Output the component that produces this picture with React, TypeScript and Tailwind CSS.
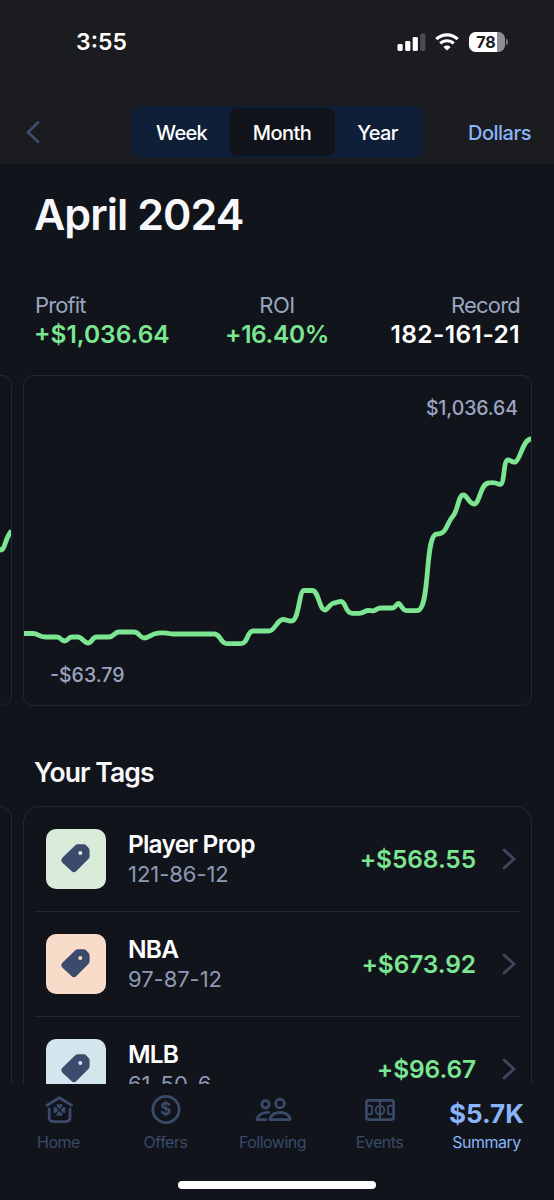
import React from "react";

const GREEN = "#7be591";

function Chevron({ left = false, className = "" }: { left?: boolean; className?: string }) {
  return (
    <svg width="14" height="22" viewBox="0 0 14 22" fill="none" className={className}>
      <path
        d={left ? "M12 1.5 2 11.2l10 9.5" : "M2 1.9 12 11 2 20.1"}
        stroke="currentColor"
        strokeWidth="2.7"
        strokeLinecap="round"
        strokeLinejoin="miter"
      />
    </svg>
  );
}

function StatusBar() {
  return (
    <div className="flex h-[83px] items-center justify-between pl-[76px] pr-[46px]">
      <span className="text-[23px] font-semibold leading-7 text-white">3:55</span>
      <div className="flex items-center">
        <svg width="29" height="20" viewBox="0 0 29 20">
          <rect x="0.5" y="12" width="5.2" height="7" rx="1.4" fill="#fff" />
          <rect x="8.2" y="9" width="5.2" height="10" rx="1.4" fill="#fff" />
          <rect x="15.7" y="5" width="5.2" height="14" rx="1.4" fill="#fff" />
          <rect x="23.2" y="1.5" width="5.2" height="17.5" rx="1.4" fill="#4b4c50" />
        </svg>
        <svg width="24" height="18" viewBox="0 0 24 18" className="ml-[9px]" fill="none" stroke="#fff" strokeWidth="3.1">
          <path d="M1.3 6.2a15.3 15.3 0 0 1 21.4 0" />
          <path d="M5.3 10.4a9.6 9.6 0 0 1 13.4 0" />
          <path d="M12 17.6l3.6-3.6a5.2 5.2 0 0 0-7.2 0z" fill="#fff" stroke="none" />
        </svg>
        <div className="ml-[10px] flex h-5 w-[36px] items-center justify-center overflow-hidden rounded-[6.5px] bg-[linear-gradient(90deg,#fff_78%,#8e8f91_78%)] pr-[2px]">
          <span className="text-[16px] font-bold leading-5 text-[#1a1c1f]">78</span>
        </div>
        <div className="ml-[1px] h-[6px] w-[2px] rounded-r-full bg-[#77787b]" />
      </div>
    </div>
  );
}

function Header() {
  return (
    <header className="h-[164px] shrink-0 bg-[#1a1c1f]">
      <StatusBar />
      <div className="mt-[23px] flex h-[52px] items-center pr-[23px] text-xl font-medium text-white">
        <Chevron left className="ml-[26px] text-[#3d4d6d]" />
        <div className="ml-[91px] flex h-[52px] w-[292px] rounded-[10px] bg-[#0f1f38] py-[2px]">
          <span className="flex w-[99px] items-center justify-center pl-[2px] pt-px tracking-[-0.7px]">Week</span>
          <span className="flex w-[105px] items-center justify-center rounded-[8px] bg-[#11141b] pr-px pt-px tracking-[-0.5px]">Month</span>
          <span className="flex w-[85px] items-center justify-center pt-px tracking-[-0.7px]">Year</span>
        </div>
        <span className="ml-auto pt-px tracking-[-0.5px] text-[#8ab4f8]">Dollars</span>
      </div>
    </header>
  );
}

function Stats() {
  return (
    <div className="mt-[24px] grid h-[58px] grid-cols-3 pl-[34px] pr-[34px] text-[24.5px] font-semibold leading-7 text-[#7be591]">
      <div>
        <div className="pl-px text-[22px] font-normal leading-[30px] tracking-[-0.9px] text-[#9ba5c0]">Profit</div>
        <div>+$1,036.64</div>
      </div>
      <div className="text-center">
        <div className="text-[22px] font-normal leading-[30px] tracking-[-0.4px] text-[#9ba5c0]">ROI</div>
        <div className="tracking-[-0.4px]">+16.40%</div>
      </div>
      <div className="text-right">
        <div className="text-[22px] font-normal leading-[30px] tracking-[-0.8px] text-[#9ba5c0]">Record</div>
        <div className="tracking-[0.4px] text-white">182-161-21</div>
      </div>
    </div>
  );
}

const CURVE =
  "M23 633.5H33C38 633.5 39 637 45 637H57C61 637 61 641 64.5 641S68 637 72 637H78C82 637 84 643 88 643S92 637 97 637H109C114 637 114 632 119 632H134C139 632 140 638 144 638S151 635 154 634C160 632 165 632.5 172 634H214C221 634 220 643.7 227 643.7H241C248 643.7 247 631 253 631H269C275 631 277 619.5 283 619.5C287 619.5 287 621 291.5 621C299 621 299 590.5 304 590.5H312C319 590.5 319 610 325 610C328 610 329 604 334 603C338 602.5 338 601.5 341 601.5C346 601.5 345 613.3 352 613.3H359C364 613.3 365 610.5 368 610.5C371 610.5 371 611 373.5 610.8C376 610.5 377 608 381 608H392C396 608 396 603.5 398.5 603.5S402 610.7 407 610.7H417C431 610.7 424 534 437 534C447 534 446 524 453 516C458 511 458 495 463.5 495C467 495 469 504 474 504C480 504 480 483 489 483C494 482 496 483 500 484.5C505 484.5 503 460 508 460C511 460 511 462.5 515 462.2C520 461 523 439 531 439";

function ChartRow() {
  return (
    <div className="mt-[27px] flex h-[331px] shrink-0 gap-[11px]">
      <div className="w-3 overflow-hidden rounded-r-[10px] border border-l-0 border-[#1c2a3b]">
        <svg width="11" height="329" viewBox="0 376 11 329" fill="none">
          <path d="M-2 548C1 551.5 3 550.5 5 544C7 538 8 534.5 11.5 531" stroke={GREEN} strokeWidth="4.8" />
        </svg>
      </div>
      <div className="relative w-[509px] overflow-hidden rounded-[10px] border border-[#1c2a3b]">
        <svg width="507" height="329" viewBox="24 376 507 329" fill="none" className="block">
          <path d={CURVE} stroke={GREEN} strokeWidth="4.8" strokeLinejoin="round" />
        </svg>
        <span className="absolute right-[13px] top-[20px] text-[19.5px] font-medium leading-6 tracking-[-0.1px] text-[#9ba5c0]">$1,036.64</span>
        <span className="absolute bottom-[18px] left-[26px] text-[19.5px] font-medium leading-6 text-[#9ba5c0]">-$63.79</span>
      </div>
    </div>
  );
}

const TAGS = [
  { name: "Player Prop", record: "121-86-12", value: "+$568.55", tile: "bg-[#d9ecda]" },
  { name: "NBA", record: "97-87-12", value: "+$673.92", tile: "bg-[#f8dbc8]" },
  { name: "MLB", record: "61-50-6", value: "+$96.67", tile: "bg-[#d3e5ed]" },
];

function TagIcon() {
  return (
    <svg width="29" height="29" viewBox="0 0 29 29">
      <path
        fill="#3b4b6b"
        fillRule="evenodd"
        d="M13.8 1.7Q15.2 .3 17 .3H22.6Q24.2 .3 25.3 1.4L27.5 3.8Q28.6 5 28.6 6.5V12.3Q28.6 13.9 27.4 15L15.4 27Q12.9 29.5 10.4 27L1.5 18.7Q-.9 16.3 1.4 13.8ZM19.3 7a2 2 0 1 0 .01 4a2 2 0 1 0 0-4Z"
      />
    </svg>
  );
}

function TagsRow() {
  return (
    <div className="flex min-h-0 flex-1 gap-[11px] overflow-hidden">
      <div className="h-[420px] w-3 rounded-tr-[16px] border-r border-t border-[#1c2a3b]" />
      <div className="h-[420px] w-[509px] shrink-0 rounded-[16px] border border-[#1c2a3b] px-[11px]">
        {TAGS.map((t) => (
          <div key={t.name} className="flex h-[105px] items-center border-b border-[#1c2a3b] pl-[11px] pr-1">
            <div className={`flex size-[60px] shrink-0 items-center justify-center rounded-[10px] pb-px pr-[2px] ${t.tile}`}>
              <TagIcon />
            </div>
            <div className="ml-[22px] flex-1 leading-[30px]">
              <div className="text-[24.5px] font-semibold tracking-[-0.8px] text-white">{t.name}</div>
              <div className="text-[22px] tracking-[-0.05px] text-[#8e9ab5]">{t.record}</div>
            </div>
            <span className="text-[24.5px] font-semibold leading-[30px] tracking-[-0.1px] text-[#7be591]">{t.value}</span>
            <Chevron className="ml-[26px] text-[#3d4963]" />
          </div>
        ))}
      </div>
    </div>
  );
}

const LEAF = "M0-.9-2.6-3.3Q-3.7-5-2.2-5.9Q-.9-6.5 0-5.3Q.9-6.5 2.2-5.9Q3.7-5 2.6-3.3Z";

function HomeIcon() {
  return (
    <svg width="30" height="30" viewBox="0 0 30 30" fill="none" stroke="currentColor" strokeWidth="2.8" strokeLinecap="round" strokeLinejoin="round">
      <path d="M3 10.3 15.3 2.7 27.6 10.3M5.2 14V22.3Q5.2 26.6 9.5 26.6H21.7Q26 26.6 26 22.3V14" />
      <g fill="currentColor" stroke="none" transform="translate(15.5 15)">
        <path d={LEAF} />
        <path d={LEAF} transform="rotate(90)" />
        <path d={LEAF} transform="rotate(180)" />
        <path d={LEAF} transform="rotate(270)" />
      </g>
    </svg>
  );
}

function OffersIcon() {
  return (
    <div className="relative flex size-[30px] items-center justify-center text-[17px] font-bold leading-none">
      <svg width="30" height="30" viewBox="0 0 30 30" className="absolute inset-0" fill="none" stroke="currentColor" strokeWidth="2.8">
        <circle cx="15" cy="14.5" r="13.1" />
      </svg>
      <span className="pb-px">$</span>
    </div>
  );
}

function FollowingIcon() {
  return (
    <svg width="38" height="26" viewBox="0 0 38 26" fill="none" stroke="currentColor" strokeWidth="2.8" strokeLinejoin="round" strokeLinecap="round">
      <circle cx="11.5" cy="7.3" r="3.7" />
      <circle cx="26" cy="6.5" r="4.3" />
      <path d="M17 22.7H35.3Q36.5 22.7 36.1 21.4C34.7 17.5 31.5 15.5 26.2 15.5S17.5 17.5 16.1 21.4Q15.8 22.7 17 22.7Z" />
      <path d="M12 22.7H4.2Q2.9 22.7 3.3 21.4C4.8 17.5 8 15.4 14.5 15.4" />
    </svg>
  );
}

function EventsIcon() {
  return (
    <svg width="30" height="22" viewBox="0 0 30 22" fill="none" stroke="currentColor" strokeWidth="2.6" strokeLinejoin="round">
      <rect x="1.4" y="1.4" width="27.2" height="19.2" rx="2" />
      <path strokeWidth="1.9" d="M15 1.5v19M1.5 6.8H5.5Q7 6.8 7 8.3V13.7Q7 15.2 5.5 15.2H1.5M28.5 6.8H24.5Q23 6.8 23 8.3V13.7Q23 15.2 24.5 15.2H28.5" />
      <circle cx="15" cy="11" r="4.3" strokeWidth="1.9" />
    </svg>
  );
}

const NAV = [
  { label: "Home", icon: <HomeIcon /> },
  { label: "Offers", icon: <OffersIcon /> },
  { label: "Following", icon: <FollowingIcon /> },
  { label: "Events", icon: <EventsIcon /> },
];

function BottomNav() {
  return (
    <nav className="h-[116px] shrink-0 bg-[#11141b] text-[#3a4a69]">
      <div className="flex px-[5px] pt-[10px] text-base leading-5 tracking-[-0.5px]">
        {NAV.map((n) => (
          <div key={n.label} className="flex w-[107px] flex-col items-center">
            <div className="flex h-[32px] items-center">{n.icon}</div>
            <span className="mt-[6px]">{n.label}</span>
          </div>
        ))}
        <div className="flex w-[107px] flex-col items-center text-[#8ab4f8]">
          <div className="mt-1 flex h-[32px] items-center text-[26px] font-bold tracking-normal">$5.7K</div>
          <span className="mt-[2px]">Summary</span>
        </div>
      </div>
      <div className="mx-auto mt-[29px] h-[8px] w-[198px] rounded-full bg-white" />
    </nav>
  );
}

export default function App() {
  return (
    <div className="flex h-[1200px] w-[554px] flex-col overflow-hidden bg-[#11141b] font-['Inter',sans-serif]">
      <Header />
      <h1 className="flex h-[102px] shrink-0 items-center pb-[2px] pl-[34px] text-[43px] font-semibold tracking-[-0.95px] text-[#f8f8fa]">April 2024</h1>
      <Stats />
      <ChartRow />
      <h2 className="mt-[33px] flex h-[67px] shrink-0 items-center pl-[34px] pt-px text-[26.5px] font-semibold tracking-[-0.9px] text-[#f8f8fa]">Your Tags</h2>
      <TagsRow />
      <BottomNav />
    </div>
  );
}
